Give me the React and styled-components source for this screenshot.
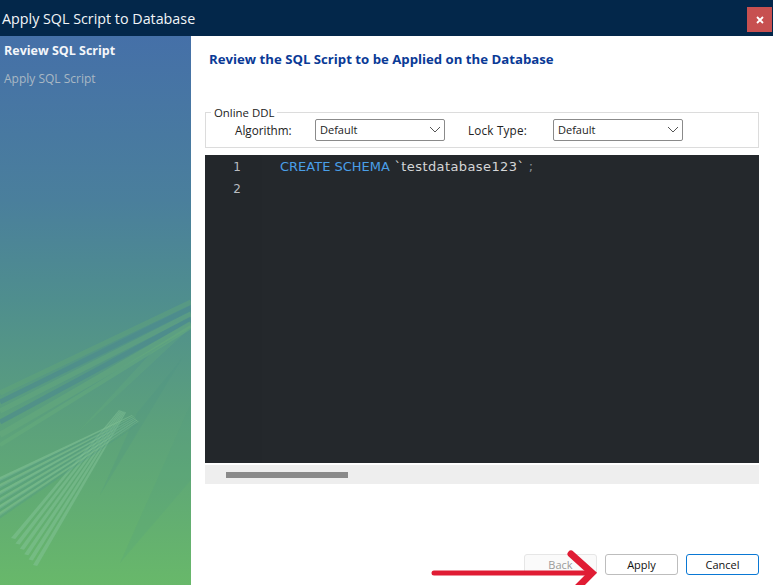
import React from 'react';
import styled, {createGlobalStyle} from 'styled-components';

const GlobalStyle=createGlobalStyle`
html,body{
    margin:0;
    padding:0;
    background:#fff;
}
body{
    font-family:"Open Sans","Noto Sans",sans-serif;
    overflow:hidden;
}
`

const upperStripes=[
    {y1:22,y2:113,w:5,c:'#63a877',o:.4},
    {y1:28,y2:122,w:5,c:'#4c8a8f',o:.6},
    {y1:34,y2:131,w:5,c:'#66ab7c',o:.45},
    {y1:39,y2:142,w:5,c:'#4c8a8f',o:.6},
    {y1:44,y2:155,w:6,c:'#66ab7c',o:.5},
    {y1:47,y2:165,w:4,c:'#69b07c',o:.4},
]

// tapered stripes, narrow at the crossing and wide at the far end
const band=(n,tip,end,tw,ew)=>Array.from({length:n},(_,i)=>{
    const t=i/(n-1)
    const a=[tip[0][0]+(tip[1][0]-tip[0][0])*t,tip[0][1]+(tip[1][1]-tip[0][1])*t]
    const b=[end[0][0]+(end[1][0]-end[0][0])*t,end[0][1]+(end[1][1]-end[0][1])*t]
    return `${a[0]},${a[1]} ${a[0]+tw[0]},${a[1]+tw[1]} ${b[0]+ew[0]},${b[1]+ew[1]} ${b[0]},${b[1]}`
})
const downBand=band(6,[[119,130],[125,132]],[[11,258],[33,285]],[1,.5],[4.2,1])
const leftBand=band(6,[[132,135],[138,141]],[[0,197],[0,232]],[.6,.6],[0,4])

const Art=()=>(
    <ArtSvg viewBox="0 0 191 305" width="191" height="305">
        <defs>
            <filter id="soft"><feGaussianBlur stdDeviation=".45"/></filter>
        </defs>
        <polygon points="152,72 77,153 191,47" fill="#6bb27c" opacity=".22"/>
        <polygon points="183,77 137,133 100,215" fill="#4f9184" opacity=".22"/>
        <polygon points="191,123 120,283 191,200" fill="#4f9c85" opacity=".16"/>
        {upperStripes.map((s,i)=>(
            <line key={i} x1="191" y1={s.y1} x2="0" y2={s.y2} stroke={s.c} strokeWidth={s.w} opacity={s.o}/>
        ))}
        <g filter="url(#soft)">
            {downBand.map((p,i)=>(
                <polygon key={i} points={p} fill="#84c498" opacity=".5"/>
            ))}
            {leftBand.map((p,i)=>(
                <polygon key={i} points={p} fill={i%2?'#7dbd90':'#80c094'} opacity=".6"/>
            ))}
            {leftBand.map((p,i)=>(
                <polygon key={i} points={p} fill="#4f9488" opacity=".3" transform="translate(0,2.4)"/>
            ))}
        </g>
    </ArtSvg>
)

const Chevron=()=>(
    <svg width="12" height="7" viewBox="0 0 12 7">
        <path d="M1 1l5 5 5-5" fill="none" stroke="#555" strokeWidth="1"/>
    </svg>
)

const App=()=>{
    return (
        <>
        <GlobalStyle/>
        <Win>
            <TitleBar>
                <Title>Apply SQL Script to Database</Title>
                <CloseBtn>
                    <svg width="8" height="8" viewBox="0 0 8 8">
                        <path d="M1 1l6 6M7 1L1 7" stroke="#fff" strokeWidth="1.8"/>
                    </svg>
                </CloseBtn>
            </TitleBar>
            <Body>
                <Sidebar>
                    <NavItem $active>Review SQL Script</NavItem>
                    <NavItem>Apply SQL Script</NavItem>
                    <Art/>
                </Sidebar>
                <Main>
                    <Heading>Review the SQL Script to be Applied on the Database</Heading>
                    <Group>
                        <Legend>Online DDL</Legend>
                        <Label $w={80}>Algorithm:</Label>
                        <Select>Default<Chevron/></Select>
                        <Label $w={85} $ml={23} $ls={.2}>Lock Type:</Label>
                        <Select>Default<Chevron/></Select>
                    </Group>
                    <Editor>
                        <Gutter>
                            <LineNo>1</LineNo>
                            <LineNo>2</LineNo>
                        </Gutter>
                        <Code>
                            <Keyword>CREATE SCHEMA</Keyword> `testdatabase123` <Semi>;</Semi>
                        </Code>
                    </Editor>
                    <ScrollTrack><ScrollThumb/></ScrollTrack>
                    <Footer>
                        <Button $disabled>Back</Button>
                        <Button>Apply</Button>
                        <Button $primary>Cancel</Button>
                    </Footer>
                </Main>
            </Body>
            <Arrow width="170" height="40" viewBox="0 0 170 40">
                <path d="M5 28H160" stroke="#e01c34" strokeWidth="5" strokeLinecap="round" fill="none"/>
                <path d="M142 9l21 19-17 17" stroke="#e01c34" strokeWidth="7" strokeLinecap="round" fill="none"/>
            </Arrow>
        </Win>
        </>
    )
}
export default App;

const Win=styled.div`
position:relative;
width:773px;
height:585px;
overflow:hidden;
display:flex;
flex-direction:column;
`
const TitleBar=styled.div`
height:36px;
background:#03274a;
display:flex;
align-items:center;
justify-content:space-between;
padding:0 1px 0 2px;
flex-shrink:0;
`
const Title=styled.div`
color:#f2f5f8;
font-size:14.3px;
`
const CloseBtn=styled.div`
width:25px;
height:25px;
background:#c75050;
display:flex;
align-items:center;
justify-content:center;
margin-top:3px;
`
const Body=styled.div`
flex:1;
display:flex;
min-height:0;
`
const Sidebar=styled.div`
width:191px;
flex-shrink:0;
display:flex;
flex-direction:column;
background:linear-gradient(180deg,#4570a8 0%,#4a7f9c 30%,#4f8e8e 48%,#5ba07c 70%,#68b86a 100%);
padding-top:6px;
box-sizing:border-box;
`
const NavItem=styled.div`
height:28px;
line-height:17px;
padding-left:4px;
font-size:${p=>p.$active?12.5:12}px;
font-weight:${p=>p.$active?700:400};
color:${p=>p.$active?'#f4f6fa':'#a9b8c4'};
`
const ArtSvg=styled.svg`
display:block;
margin-top:auto;
`
const Main=styled.div`
flex:1;
display:flex;
flex-direction:column;
padding:0 14px 10px 14px;
min-width:0;
`
const Heading=styled.div`
color:#0a3a96;
font-size:13.2px;
font-weight:700;
margin:14px 0 0 4px;
height:62px;
line-height:18px;
`
const Group=styled.div`
position:relative;
height:36px;
border:1px solid #dcdcdc;
box-sizing:border-box;
display:flex;
align-items:center;
padding:0 0 0 29px;
margin-bottom:7px;
`
const Legend=styled.div`
position:absolute;
left:5px;
top:-8px;
background:#fff;
padding:0 3px;
font-size:11.4px;
line-height:16px;
color:#222;
`
const Label=styled.div`
width:${p=>p.$w}px;
margin-left:${p=>p.$ml||0}px;
font-size:11.7px;
letter-spacing:${p=>p.$ls||0}px;
color:#222;
`
const Select=styled.div`
width:130px;
height:22px;
box-sizing:border-box;
border:1px solid #8a8a8a;
border-radius:2px;
display:flex;
align-items:center;
justify-content:space-between;
padding:0 3px 1px 4px;
font-size:11px;
color:#222;
`
const Editor=styled.div`
height:308px;
background:#24282c;
display:flex;
`
const Gutter=styled.div`
width:57px;
padding-top:2px;
background:#23272b;
`
const LineNo=styled.div`
height:22px;
line-height:20px;
padding-right:21px;
text-align:right;
font-size:12px;
color:#b8bcc0;
font-family:"DejaVu Sans",sans-serif;
`
const Code=styled.div`
padding:2px 0 0 18px;
line-height:20px;
font-size:13px;
letter-spacing:.4px;
color:#d4d6d8;
font-family:"DejaVu Sans",sans-serif;
white-space:pre;
`
const Keyword=styled.span`
color:#4a9fe8;
letter-spacing:0;
`
const Semi=styled.span`
color:#8a9098;
`
const ScrollTrack=styled.div`
height:19px;
margin-top:2px;
background:#eeeeee;
display:flex;
align-items:center;
padding-left:21px;
`
const ScrollThumb=styled.div`
width:122px;
height:6px;
background:#8a8a8a;
`
const Footer=styled.div`
margin-top:auto;
display:flex;
justify-content:flex-end;
gap:8px;
`
const Button=styled.div`
width:73px;
height:21px;
box-sizing:border-box;
border-radius:3px;
display:flex;
align-items:center;
justify-content:center;
font-size:11px;
background:${p=>p.$disabled?'#fafafa':'#fff'};
color:${p=>p.$disabled?'#9a9a9a':'#111'};
border:1px solid ${p=>p.$primary?'#0a78d4':p.$disabled?'#e6e6e6':'#bdbdbd'};
`
const Arrow=styled.svg`
position:absolute;
left:429px;
top:545px;
overflow:visible;
`
